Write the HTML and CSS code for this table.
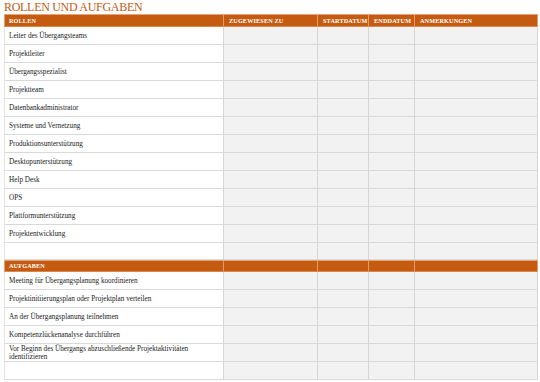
FILE: index.html
```html
<!DOCTYPE html>
<html lang="de">
<head>
<meta charset="utf-8">
<title>Rollen und Aufgaben</title>
<link rel="stylesheet" href="styles.css">
</head>
<body>
<h1 class="title">ROLLEN UND AUFGABEN</h1>
<div class="sheet">
  <div class="row head">
    <div class="cell">ROLLEN</div><div class="cell">ZUGEWIESEN ZU</div><div class="cell">STARTDATUM</div><div class="cell">ENDDATUM</div><div class="cell">ANMERKUNGEN</div>
  </div>
  <div class="row"><div class="cell name">Leiter des Übergangsteams</div><div class="cell"></div><div class="cell"></div><div class="cell"></div><div class="cell"></div></div>
  <div class="row"><div class="cell name">Projektleiter</div><div class="cell"></div><div class="cell"></div><div class="cell"></div><div class="cell"></div></div>
  <div class="row"><div class="cell name">Übergangsspezialist</div><div class="cell"></div><div class="cell"></div><div class="cell"></div><div class="cell"></div></div>
  <div class="row"><div class="cell name">Projektteam</div><div class="cell"></div><div class="cell"></div><div class="cell"></div><div class="cell"></div></div>
  <div class="row"><div class="cell name">Datenbankadministrator</div><div class="cell"></div><div class="cell"></div><div class="cell"></div><div class="cell"></div></div>
  <div class="row"><div class="cell name">Systeme und Vernetzung</div><div class="cell"></div><div class="cell"></div><div class="cell"></div><div class="cell"></div></div>
  <div class="row"><div class="cell name">Produktionsunterstützung</div><div class="cell"></div><div class="cell"></div><div class="cell"></div><div class="cell"></div></div>
  <div class="row"><div class="cell name">Desktopunterstützung</div><div class="cell"></div><div class="cell"></div><div class="cell"></div><div class="cell"></div></div>
  <div class="row"><div class="cell name">Help Desk</div><div class="cell"></div><div class="cell"></div><div class="cell"></div><div class="cell"></div></div>
  <div class="row"><div class="cell name">OPS</div><div class="cell"></div><div class="cell"></div><div class="cell"></div><div class="cell"></div></div>
  <div class="row"><div class="cell name">Plattformunterstützung</div><div class="cell"></div><div class="cell"></div><div class="cell"></div><div class="cell"></div></div>
  <div class="row"><div class="cell name">Projektentwicklung</div><div class="cell"></div><div class="cell"></div><div class="cell"></div><div class="cell"></div></div>
  <div class="row short"><div class="cell name"></div><div class="cell"></div><div class="cell"></div><div class="cell"></div><div class="cell"></div></div>
  <div class="row head sub">
    <div class="cell">AUFGABEN</div><div class="cell"></div><div class="cell"></div><div class="cell"></div><div class="cell"></div>
  </div>
  <div class="row"><div class="cell name">Meeting für Übergangsplanung koordinieren</div><div class="cell"></div><div class="cell"></div><div class="cell"></div><div class="cell"></div></div>
  <div class="row"><div class="cell name">Projektinitiierungsplan oder Projektplan verteilen</div><div class="cell"></div><div class="cell"></div><div class="cell"></div><div class="cell"></div></div>
  <div class="row"><div class="cell name">An der Übergangsplanung teilnehmen</div><div class="cell"></div><div class="cell"></div><div class="cell"></div><div class="cell"></div></div>
  <div class="row"><div class="cell name">Kompetenzlückenanalyse durchführen</div><div class="cell"></div><div class="cell"></div><div class="cell"></div><div class="cell"></div></div>
  <div class="row"><div class="cell name two">Vor Beginn des Übergangs abzuschließende Projektaktivitäten<br>identifizieren</div><div class="cell"></div><div class="cell"></div><div class="cell"></div><div class="cell"></div></div>
  <div class="row"><div class="cell name"></div><div class="cell"></div><div class="cell"></div><div class="cell"></div><div class="cell"></div></div>
</div>
</body>
</html>
```

FILE: styles.css
```css
* { box-sizing: border-box; }

html, body {
  margin: 0;
  padding: 0;
  background: #ffffff;
}

body {
  padding: 0 2px 0 4px;
  font-family: "Liberation Serif", "DejaVu Serif", serif;
  color: #1a1a1a;
}

.title {
  margin: 0;
  height: 14px;
  font-size: 12px;
  line-height: 14px;
  font-weight: normal;
  color: #c55a11;
  letter-spacing: -0.3px;
  white-space: nowrap;
}

.sheet {
  width: 534px;
  display: flex;
  flex-direction: column;
}

.row {
  display: grid;
  grid-template-columns: 220px 94px 51px 46px 123px;
  height: 18px;
}

.row.short { height: 17px; }

.cell {
  display: flex;
  align-items: center;
  padding: 0 4px;
  background: #f2f2f2;
  border-bottom: 1px solid #d9d9d9;
  border-right: 1px solid #d6d6d6;
  font-size: 7.2px;
  line-height: 8px;
  white-space: nowrap;
  overflow: hidden;
}

.cell.name {
  background: #ffffff;
  border-left: 1px solid #e4e4e4;
  border-right: 1px solid #d6d6d6;
  padding-left: 4px;
}

.cell.two {
  white-space: normal;
  line-height: 8px;
}

.head {
  height: 13px;
}

.head .cell {
  background: #c55a11;
  color: #ffffff;
  font-weight: bold;
  font-size: 6.2px;
  letter-spacing: 0.15px;
  border-top: 1px solid #e8a277;
  border-bottom: 1px solid #d9884f;
  border-right: 1px solid #e39a6a;
  padding: 0 5px;
}

.head .cell:first-child {
  border-left: 1px solid #e8a277;
  padding-left: 4px;
}

.head.sub {
  height: 12px;
}
```
